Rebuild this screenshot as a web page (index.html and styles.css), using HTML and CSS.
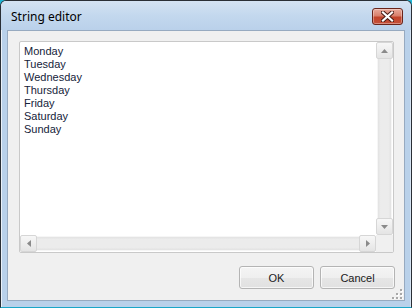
FILE: index.html
```html
<!DOCTYPE html>
<html>
<head>
<meta charset="utf-8">
<link rel="stylesheet" href="styles.css">
</head>
<body>
<div class="window">
  <div class="titlebar">
    <span class="title">String editor</span>
    <button class="close" aria-label="Close">
      <svg width="13" height="11" viewBox="0 0 13 11">
        <path d="M2 1.5 L11 9.5 M11 1.5 L2 9.5" stroke="#4a1d16" stroke-width="4.2" stroke-linecap="square"/>
        <path d="M2 1.5 L11 9.5 M11 1.5 L2 9.5" stroke="#ffffff" stroke-width="2.2" stroke-linecap="square"/>
      </svg>
    </button>
  </div>
  <div class="content">
    <div class="editor">
      <div class="text">Monday<br>Tuesday<br>Wednesday<br>Thursday<br>Friday<br>Saturday<br>Sunday</div>
      <div class="vscroll">
        <div class="sbtn"><svg width="7" height="4" viewBox="0 0 7 4"><path d="M0 4 L3.5 0 L7 4Z" fill="#8a8a8a"/></svg></div>
        <div class="vtrack"></div>
        <div class="sbtn"><svg width="7" height="4" viewBox="0 0 7 4"><path d="M0 0 L3.5 4 L7 0Z" fill="#8a8a8a"/></svg></div>
      </div>
      <div class="hscroll">
        <div class="sbtn"><svg width="4" height="7" viewBox="0 0 4 7"><path d="M4 0 L0 3.5 L4 7Z" fill="#8a8a8a"/></svg></div>
        <div class="htrack"></div>
        <div class="sbtn"><svg width="4" height="7" viewBox="0 0 4 7"><path d="M0 0 L4 3.5 L0 7Z" fill="#8a8a8a"/></svg></div>
      </div>
      <div class="corner"></div>
    </div>
    <div class="buttons">
      <button class="btn">OK</button>
      <button class="btn">Cancel</button>
    </div>
    <svg class="grip" width="11" height="10" viewBox="0 0 11 10">
      <g fill="#ffffff">
        <rect x="9" y="1" width="2" height="2"/>
        <rect x="5" y="5" width="2" height="2"/><rect x="9" y="5" width="2" height="2"/>
        <rect x="1" y="9" width="2" height="1"/><rect x="5" y="9" width="2" height="1"/><rect x="9" y="9" width="2" height="1"/>
      </g>
      <g fill="#a8a8a8">
        <rect x="8" y="0" width="2" height="2"/>
        <rect x="4" y="4" width="2" height="2"/><rect x="8" y="4" width="2" height="2"/>
        <rect x="0" y="8" width="2" height="2"/><rect x="4" y="8" width="2" height="2"/><rect x="8" y="8" width="2" height="2"/>
      </g>
    </svg>
  </div>
</div>
</body>
</html>
```
FILE: styles.css
```css
* { box-sizing: border-box; }
html, body { margin: 0; padding: 0; }
body { width: 412px; height: 308px; overflow: hidden; background: #1fb6d6; }

.window {
  width: 412px;
  height: 308px;
  border: 1px solid #2a2f36;
  border-bottom-color: #1aa6c8;
  border-radius: 6px 6px 0 0;
  background: #b9d1ea;
  box-shadow: inset 1px 1px 0 rgba(255,255,255,0.7), inset -1px 0 0 rgba(255,255,255,0.4);
  padding: 0 6px 6px 6px;
  display: flex;
  flex-direction: column;
}

.titlebar {
  height: 29px;
  display: flex;
  align-items: center;
  justify-content: space-between;
  background: linear-gradient(to bottom, #d4e3f3 0%, #c3d8ee 50%, #bad1ea 100%);
  margin: 0 -6px;
  padding: 1px 8px 0 10px;
  border-radius: 5px 5px 0 0;
}

.title {
  font-family: "Noto Sans", "DejaVu Sans", sans-serif;
  font-size: 12px;
  color: #000;
}

.close {
  width: 31px;
  height: 17px;
  margin: 0;
  padding: 0;
  border: 1px solid #6a241a;
  border-radius: 3px;
  background: linear-gradient(to bottom, #e9a99b 0%, #d9806c 45%, #c2432a 55%, #c4503a 100%);
  box-shadow: inset 0 0 0 1px rgba(255,255,255,0.35);
  display: flex;
  align-items: center;
  justify-content: center;
}
.close svg { display: block; }

.content {
  flex: 1;
  position: relative;
  background: #f0f0f0;
  border: 1px solid #97aac0;
  padding: 10px 10px 11px 11px;
  display: flex;
  flex-direction: column;
  gap: 13px;
}

.editor {
  width: 375px;
  height: 212px;
  border: 1px solid #c9c9c9;
  border-radius: 2px;
  background: #ffffff;
  display: grid;
  grid-template-columns: 1fr 17px;
  grid-template-rows: 1fr 17px;
  overflow: hidden;
}

.text {
  padding: 3px 4px;
  font-family: "Liberation Sans", Arial, sans-serif;
  font-size: 11px;
  line-height: 13px;
  color: #15233a;
}

.vscroll {
  display: flex;
  flex-direction: column;
}
.vtrack {
  flex: 1;
  background: linear-gradient(to right, #e2e2e2 0%, #ececec 20%, #ececec 80%, #e2e2e2 100%);
  margin: 0 1px;
  border-left: 1px solid #f6f6f6;
  border-right: 1px solid #f6f6f6;
}
.hscroll {
  display: flex;
}
.htrack {
  flex: 1;
  background: linear-gradient(to bottom, #e2e2e2 0%, #ececec 20%, #ececec 80%, #e2e2e2 100%);
  margin: 1px 0;
  border-top: 1px solid #f6f6f6;
  border-bottom: 1px solid #f6f6f6;
}
.sbtn {
  width: 17px;
  height: 17px;
  border: 1px solid #d6d6d6;
  border-radius: 2px;
  background: linear-gradient(to bottom, #f7f7f7 0%, #eeeeee 50%, #e4e4e4 100%);
  display: flex;
  align-items: center;
  justify-content: center;
  flex: none;
}
.sbtn svg { display: block; }
.corner { background: #f0f0f0; }

.buttons {
  display: flex;
  justify-content: flex-end;
  gap: 6px;
  margin-right: -1px;
}
.btn {
  width: 75px;
  height: 23px;
  margin: 0;
  padding: 0;
  border: 1px solid #b4b4b4;
  border-radius: 3px;
  background: linear-gradient(to bottom, #f4f4f4 0%, #efefef 50%, #e6e6e6 51%, #e1e1e1 100%);
  box-shadow: inset 0 0 0 1px rgba(255,255,255,0.7);
  font-family: "Liberation Sans", Arial, sans-serif;
  font-size: 11px;
  color: #1a1a1a;
}

.grip {
  position: absolute;
  right: 1px;
  bottom: 1px;
}
```
